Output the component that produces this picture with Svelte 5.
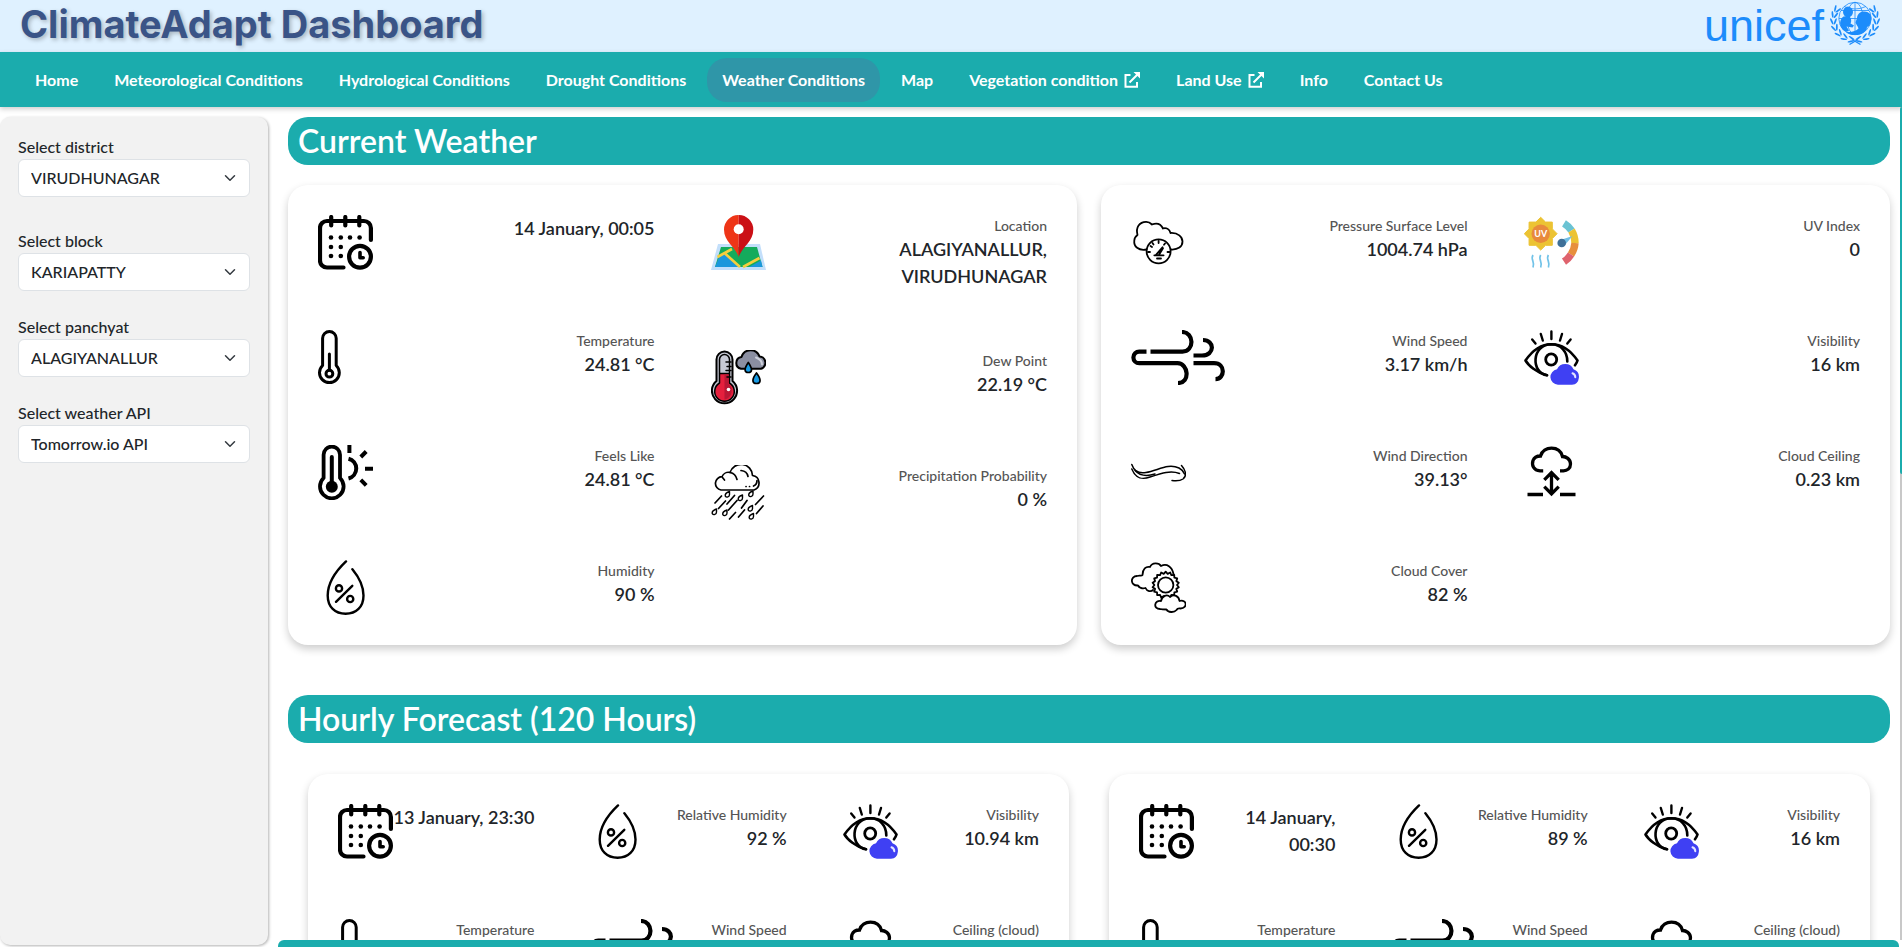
<script>
  const navItems = [
    { label: 'Home' },
    { label: 'Meteorological Conditions' },
    { label: 'Hydrological Conditions' },
    { label: 'Drought Conditions' },
    { label: 'Weather Conditions', active: true },
    { label: 'Map' },
    { label: 'Vegetation condition', external: true },
    { label: 'Land Use', external: true },
    { label: 'Info' },
    { label: 'Contact Us' },
  ];

  const filters = [
    { id: 'district', label: 'Select district', value: 'VIRUDHUNAGAR' },
    { id: 'block', label: 'Select block', value: 'KARIAPATTY' },
    { id: 'panchyat', label: 'Select panchyat', value: 'ALAGIYANALLUR' },
    { id: 'api', label: 'Select weather API', value: 'Tomorrow.io API' },
  ];

  const current = [
    [
      [
        { icon: 'calendar', lines: ['14 January, 00:05'] },
        { icon: 'thermometer', label: 'Temperature', lines: ['24.81 °C'] },
        { icon: 'feels', label: 'Feels Like', lines: ['24.81 °C'] },
        { icon: 'humidity', label: 'Humidity', lines: ['90 %'] },
      ],
      [
        { icon: 'location', label: 'Location', lines: ['ALAGIYANALLUR,', 'VIRUDHUNAGAR'] },
        { icon: 'dew', label: 'Dew Point', lines: ['22.19 °C'] },
        { icon: 'rain', label: 'Precipitation Probability', lines: ['0 %'] },
      ],
    ],
    [
      [
        { icon: 'pressure', label: 'Pressure Surface Level', lines: ['1004.74 hPa'] },
        { icon: 'wind', label: 'Wind Speed', lines: ['3.17 km/h'] },
        { icon: 'direction', label: 'Wind Direction', lines: ['39.13°'] },
        { icon: 'cover', label: 'Cloud Cover', lines: ['82 %'] },
      ],
      [
        { icon: 'uv', label: 'UV Index', lines: ['0'] },
        { icon: 'visibility', label: 'Visibility', lines: ['16 km'] },
        { icon: 'ceiling', label: 'Cloud Ceiling', lines: ['0.23 km'] },
      ],
    ],
  ];

  const hour = (date, humidity, visibility) => [
    [{ icon: 'calendar', lines: date }, { icon: 'thermometer', label: 'Temperature', lines: [] }],
    [
      { icon: 'humidity', label: 'Relative Humidity', lines: [humidity] },
      { icon: 'wind', label: 'Wind Speed', lines: [] },
    ],
    [
      { icon: 'visibility', label: 'Visibility', lines: [visibility] },
      { icon: 'ceiling', label: 'Ceiling (cloud)', lines: [] },
    ],
  ];

  const hourly = [
    hour(['13 January, 23:30'], '92 %', '10.94 km'),
    hour(['14 January,', '00:30'], '89 %', '16 km'),
  ];

  // Laurel leaves run up both sides of the emblem.
  const leaves = [102, 121, 140, 159, 178, 197, 214].map((deg) => {
    const a = (deg * Math.PI) / 180;
    return { x: 25 + 21.5 * Math.cos(a), y: 19 + 20 * Math.sin(a), turn: deg + 90 };
  });

  const star = Array.from({ length: 16 }, (_, i) => {
    const a = (i * Math.PI) / 8;
    const r = i % 2 ? 12.6 : 16.4;
    return `${16.7 + r * Math.sin(a)},${18.7 - r * Math.cos(a)}`;
  }).join(' ');

  const sunRim = Array.from({ length: 36 }, (_, i) => {
    const a = (i * Math.PI) / 18;
    const r = i % 2 ? 11.3 : 13.3;
    return `${34.7 + r * Math.sin(a)},${25 - r * Math.cos(a)}`;
  }).join(' ');
</script>

{#snippet drop(x, y)}
  <path d="M{x + 2} {y - 3}C{x - 1} {y - 2} {x - 2.6} {y} {x - 2.2} {y + 1.6}C{x - 1} {y + 3.4} {x + 2} {y + 2.6} {x + 2} {y}Z" />
{/snippet}

{#snippet icon(name)}
  <svg class="icon" class:wide={name === 'wind'} viewBox={name === 'wind' ? '0 0 94 55' : '0 0 55 55'} fill="none" stroke="#000" stroke-width="2.4" stroke-linecap="round" stroke-linejoin="round" aria-hidden="true">
    {#if name === 'calendar'}
      <g stroke-width="4.2">
        <path d="M52.9 25V13a7 7 0 0 0-7-7H9a7 7 0 0 0-7 7v32.500a7 7 0 0 0 7 7h16.500" />
        <path d="M13.2 2v8.500M27.300 2v8.500M41.300 2v8.500" />
        <circle cx="42" cy="41.700" r="10.900" />
        <path d="M42 37.500v5.200h3.200" stroke-width="3.600" />
      </g>
      <g fill="#000" stroke="none">
        {#each [[13, 22.5], [22.8, 22.5], [32, 22.5], [41.6, 22.5], [13, 32], [22.8, 32], [13, 41], [22.8, 41]] as [x, y]}
          <circle cx={x} cy={y} r="2.3" />
        {/each}
      </g>
    {:else if name === 'thermometer'}
      <path d="M4.6 35.5V8.3a6.8 6.8 0 0 1 13.6 0v27.2a9.900 9.900 0 1 1-13.600 0z" stroke-width="3" />
      <circle cx="11.4" cy="43.7" r="3.4" stroke-width="3" />
      <path d="M11.4 24v16" stroke-width="3" />
    {:else if name === 'feels'}
      <path d="M5.6 33V9.8a8.2 8.2 0 0 1 16.4 0V33a11.8 11.8 0 1 1-16.4 0z" stroke-width="3.8" />
      <circle cx="13.8" cy="41.7" r="6" fill="#000" stroke="none" />
      <g stroke-width="4" stroke-linecap="butt">
        <path d="M13.8 12v28" stroke-linecap="round" />
        <path d="M30.5 13.7a10.2 10.2 0 0 1 0 19.8M31.4 0v8M42.8 12l5.4-5.500M47 23.700h8M42.800 34.800l5.400 5.500" />
      </g>
    {:else if name === 'humidity'}
      <path d="M28 1.4C20 9 9.7 22 9.7 35.5C9.7 47 17 53.8 27.6 53.8S45.5 47 45.5 35.5C45.5 26 40 16 34.4 9.2" />
      <path d="M34.3 25.8 18 41.8" />
      <circle cx="21" cy="28.4" r="3.1" />
      <circle cx="32.2" cy="39" r="3.1" />
    {:else if name === 'location'}
      <g stroke="none">
        <path d="M7 29h42l6 26H0z" fill="#c3dffb" />
        <path d="M10 32h36l5.5 20H4z" fill="#14ab5c" />
        <path d="M8.5 41 14 39l13 11v2H4z" fill="#1b97dc" />
        <path d="M38 52 50 45.5l1.5 6.5z" fill="#1b97dc" />
        <path d="M6.5 42 21 34M14 38.5 29 52M32 52 48.5 43" stroke="#f5ce3e" stroke-width="2.6" stroke-linecap="butt" />
        <path d="M27.7 0A14.5 14.5 0 0 0 13 14.5C13 27 24 31 27.7 42z" fill="#ee3517" />
        <path d="M27.7 0A14.5 14.5 0 0 1 42.3 14.5C42.3 27 31.5 31 27.7 42z" fill="#cb1016" />
        <circle cx="27.7" cy="14.3" r="5" fill="#fff" />
      </g>
    {:else if name === 'dew'}
      <path d="M5.500 31V9.500a8 8 0 0 1 16 0V31a12.600 12.600 0 1 1-16 0z" fill="#c6c9d4" stroke-width="2" />
      <path d="M8.500 33V23.500h10V33a9.800 9.800 0 1 1-10 0z" fill="#e51f3d" stroke-width="1.500" />
      <path d="M13.500 24.500h4V34a8.800 8.800 0 0 1-4 15.500z" fill="#b91735" stroke="none" />
      <path d="M8.500 23V9.500a5 5 0 0 1 10 0V23" stroke-width="1.500" />
      <path d="M15 12h5M16 16.500h4M15 20.500h5M16 27h4" stroke-width="1.500" />
      <circle cx="17.500" cy="39.500" r="1.800" fill="#fff" stroke="none" />
      <path d="M30 18.800a6 6 0 0 1 .5-11.800a9.500 9.500 0 0 1 18-.5a6.300 6.300 0 0 1 1.500 12.300z" fill="#8b8fa2" stroke-width="2" />
      <path d="M45 7.500c4 1.500 6 4 6 7" stroke="#cdd0da" stroke-width="2" />
      <path d="M37.300 12.500c-4.500 6.500-4 10 0 10s4.500-3.500 0-10z" fill="#189be4" stroke-width="1.700" />
      <path d="M45.500 23c-5 6.500-4.500 10.500 0 10.500s5-4 0-10.500z" fill="#189be4" stroke-width="1.700" />
    {:else if name === 'rain'}
      <g stroke-width="1.7">
        <path d="M10 25a6.7 6.7 0 0 1 1-13.3a7 7 0 0 1 8-4.2a11.5 11.5 0 0 1 22.5 3a7.5 7.5 0 0 1 1.5 14.5z" />
        <path d="M11.5 12.5l2 2.5M19 7.5c3 .5 6 2.5 7 7M30 5.5c5 .5 6.5 3 7 6M46 15.5c0 3-1 4.5-3.5 5.5M35 21.5h.1M38.5 21.500h.1" />
        <path d="M10.5 31 4 38M23.5 30.5 16 39M14.5 36 7.5 43.5M26 35.5 17.5 45M36 35.5 30.5 43M52.5 31 44.5 39.5M52 41 45.5 48.5M24.5 47.500 18.500 54M33.500 45 27.500 52" />
      </g>
      <g stroke-width="1.4">
        {@render drop(16.5, 29.5)}{@render drop(29.5, 33)}{@render drop(40, 29)}{@render drop(3.5, 47)}{@render drop(14, 48)}{@render drop(39.5, 43.5)}{@render drop(40.5, 51.5)}
      </g>
    {:else if name === 'pressure'}
      <g stroke-width="1.8">
        <path d="M15.5 34.5C7.5 36 2.5 31.5 3.3 25.5C3.5 22.5 5 21 6.5 20C4.5 12 8.5 7 15 6.8C18 6.7 19.5 8 21 9.5C26 7.5 30 9.5 32 13.5C35.5 12.5 38.5 14.5 39.5 18C47 17.5 51.5 22 51.5 26.5C51.5 31.5 47 35 40 34.5" />
        <circle cx="27.6" cy="36.3" r="12" />
        <path d="M19.5 31l1.500 1M21.500 28l1 1.500M27.600 26v2M34 28.500l-1 1.300M25 39.800l6.500-7.500 .5 1-4 6.500M23.300 40.300h9.300M26 43.500h4" />
        <path d="M17 37h2M36.5 37h2" />
      </g>
    {:else if name === 'wind'}
      <g stroke-width="4.2" stroke-linecap="butt">
        <path d="M15.5 21.6H8.2a5.8 5.8 0 0 0 0 11.6H46.5c11 0 13 19.8.5 19.8" />
        <path d="M19.5 21.6H51.5c12 0 12-19.6-.5-19.6M62.5 25.5h8.5c13 0 13-15.5 1-15.5M62.5 33.2H83c12 0 11 16 1.5 16" />
      </g>
    {:else if name === 'direction'}
      <g stroke-width="1.5">
        <path d="M.8 19.500C3 26 7 29 15 27.500C27 25.500 37 18 48 23C50 24 52.500 26.500 53.500 29" />
        <path d="M.8 24C5 34 11 35 19 32C31 28 40 25 48.500 28.500" />
        <path d="M4 25.500C9 31 16 31.500 24 29" />
        <path d="M50.500 20.500C55 25.500 56 31 52 34C49 36 45 36 41 35.500" />
      </g>
    {:else if name === 'cover'}
      <g stroke-width="1.8">
        <path d="M22 30C20 32 16 31.5 14.5 28C11 29 8 27.5 7 25.5C-1 26-1 16 6 16C9 15 10.5 16.5 11.5 15C11.5 9 15 6 19 7C21 2 28 2.5 30 6C36 3 41 7 42.5 14" />
        <polygon points={sunRim} />
        <circle cx="34.7" cy="25" r="7.7" />
        <path d="M29 49C22 49 23 40 30 41C31 36 36 33.5 39 37C43 33.5 48 36 48.5 41C56 39 57 48 49.5 48.5C47 48 46 49 45.5 50C43 53 37 52.5 35.5 49.5C33 49.5 31 49.5 29 49z" fill="#fff" />
      </g>
    {:else if name === 'uv'}
      <g stroke-linecap="butt">
        <polygon points={star} fill="#ecc333" stroke="#ecc333" stroke-width="1" />
        <circle cx="16.7" cy="18.7" r="9.2" fill="#e88a3c" stroke="none" />
        <text x="16.7" y="22" text-anchor="middle" fill="#fff" stroke="none" font-size="9" font-weight="700">UV</text>
        <path d="M9 40c-3 4.500 2.500 7 0 12.500M16.700 40c-3 4.500 2.500 7 0 12.500M24.400 40c-3 4.500 2.500 7 0 12.500" stroke="#72c3e8" stroke-width="1.700" />
        <g stroke-width="7.4">
          <path d="M40 8.3A23.700 23.700 0 0 1 47.500 15.500" stroke="#6bc3d3" />
          <path d="M47.500 15.500A23.700 23.700 0 0 1 51 28" stroke="#ecc333" />
          <path d="M51 28A23.700 23.700 0 0 1 47 39.500" stroke="#e78f3d" />
          <path d="M47 39.500A23.700 23.700 0 0 1 40 46.700" stroke="#df636d" />
        </g>
        <path d="M36.5 25 48.5 21 40.5 30.5z" fill="#72bfe4" stroke="none" />
        <circle cx="37.7" cy="28" r="4.3" fill="#3f7098" stroke="none" />
      </g>
    {:else if name === 'visibility'}
      <path d="M23 45.3C13 43 4 35 1.5 30.5C9 19.5 18 14.2 27.5 14.2S46 19.5 53.5 30.5C53 32.5 52 34 51 35.3" stroke-width="2.6" />
      <path d="M27.5 14.2C7 14.5 7 43 23 45.3M27.5 14.2C37 14.2 43.5 22 43.3 31.5" stroke-width="2.6" />
      <ellipse cx="27.2" cy="29.5" rx="5.5" ry="5.7" stroke-width="2.8" />
      <path d="M27.4 1.5v7.5M16.8 4l2 6.5M8.2 9.5l3.3 4M38 4l-2 6.500M46.600 9.500l-3.300 4" />
      <path d="M34 54.8a7.8 7.8 0 0 1-1-15.5a9 9 0 0 1 16.5 0a8 8 0 0 1-1.5 15.5z" fill="#3f40f3" stroke="none" />
      <path d="M48.5 43.3c2 .8 2.8 2.3 2.8 4" stroke="#e4e4ff" stroke-width="2" />
    {:else if name === 'ceiling'}
      <g stroke-width="3.3" stroke-linecap="butt" stroke-linejoin="miter">
        <path d="M19.2 25.8H16C9.5 25.5 7.5 20 9 15.5C10.5 11.5 13.5 11 16.5 11C18 6 22.5 3.2 27.5 3.2S37 6 38.5 11.5C42 11.5 46.5 14 46.5 19C46.5 23.5 43 25.8 39.5 25.8H36" />
        <path d="M27.5 27v22M20.3 34.8l7.2-7.3 7.2 7.3M20.3 41.7l7.2 7.3 7.2-7.3M3.5 49.5h15.5M36 49.5h15.5" />
      </g>
    {/if}
  </svg>
{/snippet}

{#snippet card(columns)}
  <article class="card">
    {#each columns as column}
      <div class="column">
        {#each column as item}
          <div class="item">
            {@render icon(item.icon)}
            <div class="reading">
              {#if item.label}<div class="name">{item.label}</div>{/if}
              {#each item.lines as line}<div class="value">{line}</div>{/each}
            </div>
          </div>
        {/each}
      </div>
    {/each}
  </article>
{/snippet}

<div class="page">
  <header class="banner">
    <h1>ClimateAdapt Dashboard</h1>
    <div class="logo">
      <span>unicef</span>
      <svg viewBox="0 0 50 46" width="50" height="46" fill="none" stroke="#1c8cfb" aria-hidden="true">
        <g stroke-width="0.8">
          <circle cx="25" cy="17.5" r="16.2" />
          <ellipse cx="25" cy="17.5" rx="8" ry="16.2" />
          <path d="M25 1.3v32M11 9.5h28M9 17.5h32M14 5.5q11 5 22 0" />
        </g>
        <g fill="#1c8cfb" stroke="none">
          <ellipse cx="18" cy="11" rx="5" ry="5.4" />
          <path d="M13.5 15.5C10 18 9 23 11.500 27C13.500 30.500 17 31.500 19 29.500L16.500 25.500L22.500 26.500L24 24.500L20.500 22.500C22 20 21 16.500 19 15z" />
          <path d="M34 10.500C40 10.500 42.500 15.500 41 20C40.500 24 38.500 25.500 37 26C37 31 31 34.500 24 34C20 34 16.500 32 15.500 30.500C20 31.500 26 30.500 28.500 27.500C28 25.500 26.500 24 25.500 21.500L27 17C27.500 13 30 10.500 34 10.500z" />
        </g>
        <g fill="#1c8cfb" stroke="none">
          {#each leaves as leaf}
            <g transform="translate({leaf.x} {leaf.y}) rotate({leaf.turn})">
              <ellipse cx="0" cy="-1.9" rx="3.4" ry="0.9" transform="rotate(-22)" />
              <ellipse cx="0" cy="1.9" rx="3.4" ry="0.9" transform="rotate(22)" />
            </g>
            <g transform="translate({50 - leaf.x} {leaf.y}) rotate({-leaf.turn})">
              <ellipse cx="0" cy="-1.9" rx="3.4" ry="0.9" transform="rotate(22)" />
              <ellipse cx="0" cy="1.9" rx="3.4" ry="0.9" transform="rotate(-22)" />
            </g>
          {/each}
        </g>
        <path d="M19.5 43.5 28 38.5M30.5 43.5 22 38.5" stroke-width="1.4" />
      </svg>
    </div>
  </header>

  <nav>
    {#each navItems as item}
      <a href="#{item.label}" class:active={item.active}>
        {item.label}
        {#if item.external}
          <svg viewBox="0 0 16 16" width="16" height="16" fill="none" stroke="#fff" stroke-width="2" aria-hidden="true">
            <path d="M6.5 3H1.5v11.8h11.5V10M5.5 10.5 14 2" />
            <path d="M9.5 0H16v6.5z" fill="#fff" stroke="none" />
          </svg>
        {/if}
      </a>
    {/each}
  </nav>

  <div class="body">
    <aside>
      {#each filters as f}
        <div class="field">
          <label for={f.id}>{f.label}</label>
          <div class="select">
            <select id={f.id}><option>{f.value}</option></select>
            <svg viewBox="0 0 16 16" width="12" height="12" fill="none" stroke="#343a40" stroke-width="2" stroke-linecap="round" stroke-linejoin="round" aria-hidden="true"><path d="m2 5 6 6 6-6" /></svg>
          </div>
        </div>
      {/each}
    </aside>

    <div class="panel">
      <main>
        <h2>Current Weather</h2>
        <section class="cards">
          {#each current as columns}{@render card(columns)}{/each}
        </section>
        <h2>Hourly Forecast (120 Hours)</h2>
        <section class="cards hourly">
          {#each hourly as columns}{@render card(columns)}{/each}
        </section>
      </main>
      <div class="track"><div class="thumb"></div></div>
      <div class="bottom-bar"></div>
    </div>
  </div>
</div>

<style>
  :global(body) {
    margin: 0;
    background: #fff;
  }

  .page {
    --teal: #1bacad;
    display: flex;
    flex-direction: column;
    height: 100vh;
    overflow: hidden;
    font-family: Lato, 'Liberation Sans', sans-serif;
    font-size: 16px;
    font-weight: 500;
    line-height: 24px;
    color: #212529;
  }

  .page :global(*) {
    box-sizing: border-box;
  }

  .banner {
    display: flex;
    flex: none;
    align-items: flex-start;
    justify-content: space-between;
    height: 52px;
    padding: 0 22px 0 20px;
    background: #dff1ff;
  }

  h1 {
    margin: 0;
    font-family: Inter, sans-serif;
    font-size: 38px;
    font-weight: 700;
    line-height: 48px;
    color: #3a5487;
    text-shadow: 2px 2px 4px rgba(0, 0, 0, 0.25);
  }

  .logo {
    display: flex;
    align-items: flex-start;
    gap: 6px;
    font-family: 'Liberation Sans', Arial, sans-serif;
    font-size: 45px;
    font-weight: 400;
    line-height: 52px;
    color: #1c8cfb;
  }

  .logo svg {
    margin-top: 1px;
  }

  nav {
    display: flex;
    flex: none;
    align-items: center;
    gap: 6px;
    height: 55px;
    padding: 0 20px;
    background: var(--teal);
    box-shadow: 0 2px 5px rgba(0, 0, 0, 0.2);
  }

  nav a {
    display: flex;
    align-items: center;
    gap: 6px;
    padding: 10px 15px;
    border-radius: 20px;
    font-weight: 700;
    color: #fff;
    text-decoration: none;
    white-space: nowrap;
  }

  nav a.active {
    background: #2f96a8;
  }

  .body {
    display: flex;
    flex: 1;
    gap: 10px;
    min-height: 0;
  }

  aside {
    flex: none;
    width: 268px;
    margin: 10px 0 2px;
    padding: 18px;
    border-radius: 10px;
    background: #f2f2f2;
    box-shadow: 1px 1px 3px rgba(0, 0, 0, 0.3);
  }

  .field {
    margin-bottom: 24px;
  }

  .field:first-child {
    margin-bottom: 32px;
  }

  label {
    display: block;
  }

  .select {
    display: grid;
    align-items: center;
  }

  .select > * {
    grid-area: 1 / 1;
  }

  .select svg {
    justify-self: end;
    margin-right: 14px;
    pointer-events: none;
  }

  select {
    width: 100%;
    height: 38px;
    padding: 0 36px 0 12px;
    appearance: none;
    border: 1px solid #dee2e6;
    border-radius: 6px;
    background: #fff;
    font: inherit;
    color: inherit;
  }

  .panel {
    position: relative;
    flex: 1;
    min-width: 0;
    overflow: hidden;
  }

  main {
    height: 100%;
    padding: 10px 12px 0 10px;
    overflow: hidden;
  }

  h2 {
    margin: 0;
    padding: 0 10px;
    border-radius: 20px;
    background: var(--teal);
    font-size: 32px;
    font-weight: 600;
    line-height: 48px;
    color: #fff;
  }

  .cards {
    display: grid;
    grid-template-columns: 1fr 1fr;
    gap: 24px;
    margin: 20px 0 50px;
  }

  .cards.hourly {
    gap: 40px;
    margin: 31px 20px;
  }

  .card {
    display: flex;
    gap: 56px;
    padding: 30px;
    border-radius: 20px;
    background: #fff;
    box-shadow: 0 4px 8px rgba(0, 0, 0, 0.2);
  }

  .column {
    display: flex;
    flex: 1 1 0;
    flex-direction: column;
    gap: 60px;
    min-width: 0;
  }

  .item {
    display: flex;
    justify-content: space-between;
    min-height: 55px;
  }

  .icon {
    flex: none;
    width: 55px;
    height: 55px;
  }

  .icon.wide {
    width: 94px;
  }

  .reading {
    text-align: right;
    white-space: nowrap;
  }

  .name {
    font-size: 14px;
    line-height: 21px;
    color: #555;
  }

  .value {
    font-size: 18px;
    font-weight: 600;
    line-height: 27px;
  }

  .track {
    position: absolute;
    top: 0;
    right: 0;
    bottom: 7px;
    width: 2px;
    background: #c8c8c8;
  }

  .thumb {
    height: 44%;
    border-radius: 2px 0 0 2px;
    background: var(--teal);
  }

  .bottom-bar {
    position: absolute;
    right: 3px;
    bottom: 0;
    left: 0;
    height: 7px;
    border-radius: 6px 6px 0 0;
    background: var(--teal);
  }
</style>
